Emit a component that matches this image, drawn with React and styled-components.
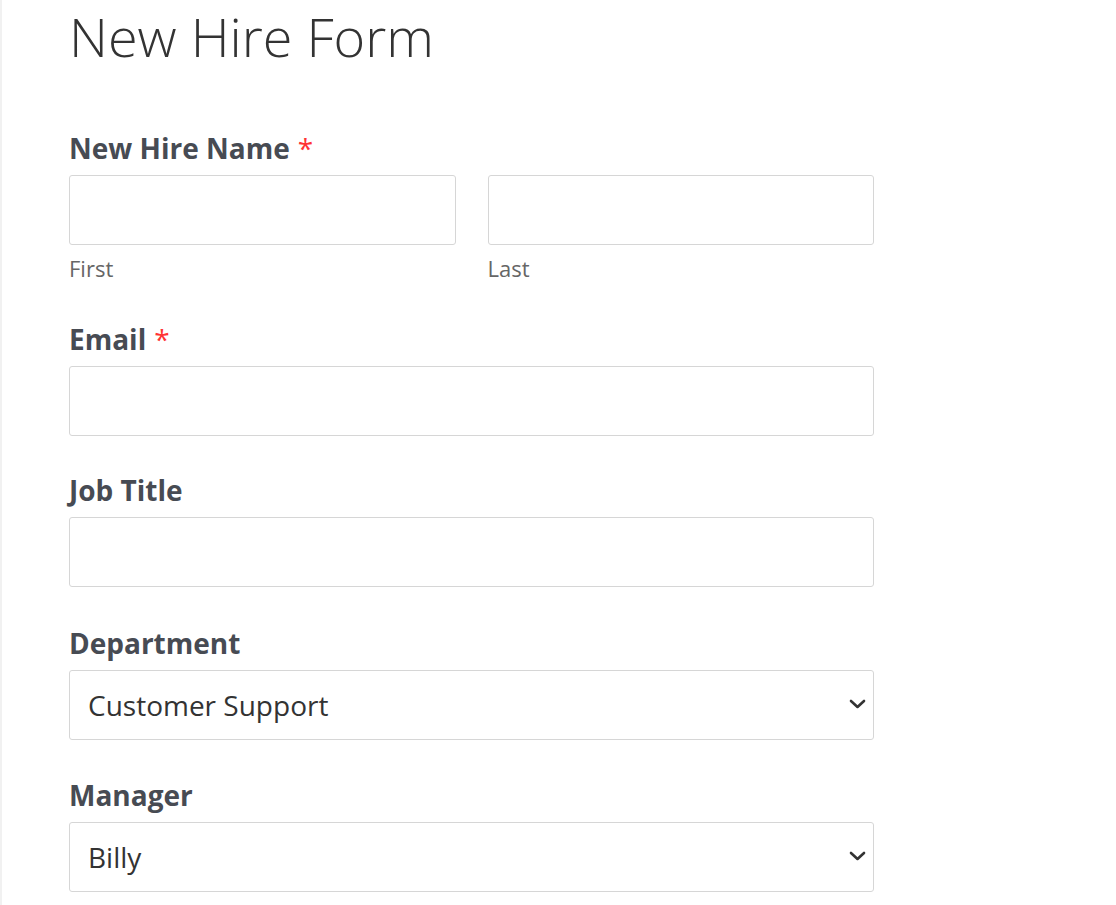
import React from 'react'
import styled, { createGlobalStyle } from 'styled-components'

const GlobalStyle = createGlobalStyle`
    html, body {
        margin: 0;
        padding: 0;
        background: #fff;
    }
    body {
        font-family: "Open Sans", "Noto Sans", "Liberation Sans", sans-serif;
    }
`

const Page = styled.div`
    min-height: 905px;
    border-left: 2px solid #f1f1f1;
    padding: 0 0 0 67px;
    box-sizing: border-box;
`

const Form = styled.form`
    width: 805px;
    display: flex;
    flex-direction: column;
`

const Title = styled.h1`
    margin: 0;
    padding-top: 1px;
    font-size: 54px;
    line-height: 70px;
    font-weight: 300;
    color: #333;
    margin-bottom: 59px;
`

const Field = styled.div`
    display: flex;
    flex-direction: column;
    margin-bottom: ${p => p.gap || 37}px;
`

const Label = styled.label`
    font-size: 28px;
    line-height: 36px;
    font-weight: 700;
    color: #474b53;
    margin-bottom: 9px;
    .req {
        color: #f33;
        font-weight: 400;
        margin-left: 8px;
    }
`

const Row = styled.div`
    display: grid;
    grid-template-columns: 1fr 1fr;
    column-gap: 32px;
`

const Sub = styled.div`
    display: flex;
    flex-direction: column;
`

const Input = styled.input`
    box-sizing: border-box;
    width: 100%;
    height: 70px;
    border: 1px solid #d6d6d6;
    border-radius: 3px;
    background: #fff;
    padding: 0 18px;
    font: inherit;
    font-size: 28px;
    outline: none;
`

const SubLabel = styled.span`
    font-size: 22px;
    line-height: 30px;
    color: #666;
    margin-top: 8px;
`

const SelectWrap = styled.div`
    position: relative;
    svg {
        position: absolute;
        right: 7px;
        top: 28px;
        pointer-events: none;
    }
`

const Select = styled.select`
    appearance: none;
    box-sizing: border-box;
    width: 100%;
    height: 70px;
    border: 1px solid #d6d6d6;
    border-radius: 3px;
    background: #fff;
    padding: 0 18px;
    font: inherit;
    font-size: 28px;
    color: #333;
    outline: none;
`

const Chevron = () => (
    <svg width="19" height="12" viewBox="0 0 19 12">
        <path d="M3 3 L9.5 9 L16 3" fill="none" stroke="#333" strokeWidth="2.6" strokeLinecap="round" strokeLinejoin="round" />
    </svg>
)

const Dropdown = ({ value, options }) => (
    <SelectWrap>
        <Select defaultValue={value}>
            {options.map(o => <option key={o}>{o}</option>)}
        </Select>
        <Chevron />
    </SelectWrap>
)

const App = () => (
    <>
        <GlobalStyle />
        <Page>
            <Form>
                <Title>New Hire Form</Title>
                <Field gap={38}>
                    <Label>New Hire Name<span className="req">*</span></Label>
                    <Row>
                        <Sub>
                            <Input />
                            <SubLabel>First</SubLabel>
                        </Sub>
                        <Sub>
                            <Input />
                            <SubLabel>Last</SubLabel>
                        </Sub>
                    </Row>
                </Field>
                <Field gap={36}>
                    <Label>Email<span className="req">*</span></Label>
                    <Input type="email" />
                </Field>
                <Field gap={38}>
                    <Label>Job Title</Label>
                    <Input />
                </Field>
                <Field>
                    <Label>Department</Label>
                    <Dropdown value="Customer Support" options={['Customer Support', 'Sales', 'Engineering', 'Marketing']} />
                </Field>
                <Field>
                    <Label>Manager</Label>
                    <Dropdown value="Billy" options={['Billy', 'Sarah', 'Tom']} />
                </Field>
            </Form>
        </Page>
    </>
)

export default App
